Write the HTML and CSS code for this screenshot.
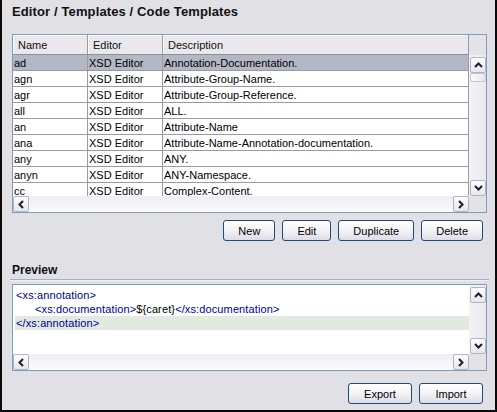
FILE: index.html
```html
<!DOCTYPE html>
<html>
<head>
<meta charset="utf-8">
<title>Code Templates</title>
<link rel="stylesheet" href="styles.css">
</head>
<body>
<div class="panel">
  <div class="title">Editor / Templates / Code Templates</div>

  <div class="table-box">
    <div class="header">
      <div class="hcell">Name</div>
      <div class="hcell">Editor</div>
      <div class="hcell">Description</div>
    </div>
    <div class="corner"></div>
    <div class="rows">
      <div class="row sel"><div class="cell">ad</div><div class="cell">XSD Editor</div><div class="cell">Annotation-Documentation.</div></div>
      <div class="row"><div class="cell">agn</div><div class="cell">XSD Editor</div><div class="cell">Attribute-Group-Name.</div></div>
      <div class="row"><div class="cell">agr</div><div class="cell">XSD Editor</div><div class="cell">Attribute-Group-Reference.</div></div>
      <div class="row"><div class="cell">all</div><div class="cell">XSD Editor</div><div class="cell">ALL.</div></div>
      <div class="row"><div class="cell">an</div><div class="cell">XSD Editor</div><div class="cell">Attribute-Name</div></div>
      <div class="row"><div class="cell">ana</div><div class="cell">XSD Editor</div><div class="cell">Attribute-Name-Annotation-documentation.</div></div>
      <div class="row"><div class="cell">any</div><div class="cell">XSD Editor</div><div class="cell">ANY.</div></div>
      <div class="row"><div class="cell">anyn</div><div class="cell">XSD Editor</div><div class="cell">ANY-Namespace.</div></div>
      <div class="row"><div class="cell">cc</div><div class="cell">XSD Editor</div><div class="cell">Complex-Content.</div></div>
    </div>
    <div class="vscroll">
      <div class="sbtn"><svg width="9" height="6" viewBox="0 0 9 6"><path d="M1 5L4.5 1.5L8 5" fill="none" stroke="#1e1e2a" stroke-width="2"/></svg></div>
      <div class="thumb"></div>
      <div class="vspace"></div>
      <div class="sbtn"><svg width="9" height="6" viewBox="0 0 9 6"><path d="M1 1L4.5 4.5L8 1" fill="none" stroke="#1e1e2a" stroke-width="2"/></svg></div>
    </div>
    <div class="hscroll">
      <div class="sbtn"><svg width="6" height="9" viewBox="0 0 6 9"><path d="M5 1L1.5 4.5L5 8" fill="none" stroke="#1e1e2a" stroke-width="2"/></svg></div>
      <div class="sbtn"><svg width="6" height="9" viewBox="0 0 6 9"><path d="M1 1L4.5 4.5L1 8" fill="none" stroke="#1e1e2a" stroke-width="2"/></svg></div>
    </div>
    <div class="corner"></div>
  </div>

  <div class="btn-row">
    <button class="btn">New</button>
    <button class="btn">Edit</button>
    <button class="btn">Duplicate</button>
    <button class="btn">Delete</button>
  </div>

  <div class="section-label">Preview</div>
  <div class="separator"></div>

  <div class="preview-box">
    <div class="code">
      <div class="line"><span class="tag">&lt;xs:annotation&gt;</span></div>
      <div class="line indent"><span class="tag">&lt;xs:documentation&gt;</span>${caret}<span class="tag">&lt;/xs:documentation&gt;</span></div>
      <div class="line current"><span class="tag">&lt;/xs:annotation&gt;</span></div>
    </div>
    <div class="vscroll pv">
      <div class="sbtn"><svg width="9" height="6" viewBox="0 0 9 6"><path d="M1 5L4.5 1.5L8 5" fill="none" stroke="#1e1e2a" stroke-width="2"/></svg></div>
      <div class="vspace"></div>
      <div class="sbtn"><svg width="9" height="6" viewBox="0 0 9 6"><path d="M1 1L4.5 4.5L8 1" fill="none" stroke="#1e1e2a" stroke-width="2"/></svg></div>
    </div>
    <div class="hscroll">
      <div class="sbtn"><svg width="6" height="9" viewBox="0 0 6 9"><path d="M5 1L1.5 4.5L5 8" fill="none" stroke="#1e1e2a" stroke-width="2"/></svg></div>
      <div class="sbtn"><svg width="6" height="9" viewBox="0 0 6 9"><path d="M1 1L4.5 4.5L1 8" fill="none" stroke="#1e1e2a" stroke-width="2"/></svg></div>
    </div>
    <div class="corner"></div>
  </div>

  <div class="btn-row bottom">
    <button class="btn wide">Export</button>
    <button class="btn wide">Import</button>
  </div>
</div>
</body>
</html>
```

FILE: styles.css
```css
html, body {
  margin: 0;
  padding: 0;
}

body {
  background: #e1e0e4;
  font-family: "Liberation Sans", Arial, sans-serif;
  font-size: 11px;
  color: #000;
}

.panel {
  box-sizing: border-box;
  width: 497px;
  height: 412px;
  border: 2px solid #0a0a0a;
  border-top: 0;
  padding: 4px 8px 0 10px;
  display: flex;
  flex-direction: column;
}

.title {
  font-size: 13px;
  font-weight: bold;
  line-height: 16px;
  height: 16px;
  margin-bottom: 14px;
  letter-spacing: 0.12px;
  color: #111;
}

/* ---------- table ---------- */
.table-box {
  box-sizing: border-box;
  height: 179px;
  border: 1px solid #7f9db9;
  display: grid;
  grid-template-columns: 456px 17px;
  grid-template-rows: 20px 141px 16px;
  background: #e3e2e6;
}

.header {
  display: grid;
  grid-template-columns: 75px 75px 306px;
  background: #e9e8ec;
}

.hcell {
  box-sizing: border-box;
  height: 20px;
  line-height: 19px;
  padding: 1px 0 0 5px;
  border-right: 1px solid #9a9aa2;
  border-bottom: 1px solid #8e8e96;
  box-shadow: inset 1px 1px 0 #fbfbfc;
  color: #111;
}

.corner {
  background: #e3e2e6;
}

.rows {
  overflow: hidden;
  background: #fff;
}

.row {
  display: grid;
  grid-template-columns: 75px 75px 306px;
  box-sizing: border-box;
  height: 16px;
  border-bottom: 1px solid #9b9b9b;
}

.row.sel {
  background: #b4b7c5;
}

.cell {
  box-sizing: border-box;
  padding: 1px 0 0 1px;
  line-height: 14px;
  border-right: 1px solid #9b9b9b;
  white-space: nowrap;
  overflow: hidden;
}

/* ---------- scrollbars ---------- */
.vscroll {
  display: flex;
  flex-direction: column;
  align-items: flex-end;
  padding: 2px 0 0 0;
  background: linear-gradient(to right, #f4f4f7, #e9e9ee);
}

.vspace {
  flex: 1;
}

.hscroll {
  display: flex;
  justify-content: space-between;
  background: linear-gradient(#eeeef3, #fbfbfd);
}

.sbtn {
  box-sizing: border-box;
  width: 16px;
  height: 16px;
  border: 1px solid #b1b3c3;
  border-radius: 2px;
  background: linear-gradient(#fdfdfe, #e6e7ee);
  display: flex;
  align-items: center;
  justify-content: center;
}

.thumb {
  box-sizing: border-box;
  width: 16px;
  height: 9px;
  border: 1px solid #c3c5d2;
  border-radius: 2px;
  background: linear-gradient(to right, #fafafc, #e4e5ec);
}

/* ---------- buttons ---------- */
.btn-row {
  display: flex;
  justify-content: flex-end;
  gap: 7px;
  margin-top: 7px;
  padding-right: 4px;
}

.btn-row.bottom {
  margin-top: 12px;
}

.btn {
  box-sizing: border-box;
  height: 21px;
  padding: 0 14px;
  margin: 0;
  border: 1px solid #1f4b7a;
  border-radius: 3px;
  background: linear-gradient(#ffffff 0%, #f5f5f7 45%, #dcdce5 100%);
  font-family: "Liberation Sans", Arial, sans-serif;
  font-size: 11px;
  color: #000;
}

.btn.wide {
  width: 64px;
  padding: 0;
}

/* ---------- preview ---------- */
.section-label {
  margin-top: 22px;
  font-size: 12px;
  font-weight: bold;
  line-height: 14px;
  height: 14px;
  color: #111;
}

.separator {
  margin: 2px -2px 0 -2px;
  height: 1px;
  background: #9fb2ca;
  border-bottom: 1px solid #f0f0f3;
}

.preview-box {
  box-sizing: border-box;
  margin-top: 3px;
  height: 87px;
  border: 1px solid #7f9db9;
  display: grid;
  grid-template-columns: 456px 17px;
  grid-template-rows: 69px 16px;
  background: #e3e2e6;
}

.code {
  background: #fff;
  padding: 3px 0 0 2px;
  overflow: hidden;
}

.line {
  height: 14px;
  line-height: 14px;
  padding-left: 1px;
  white-space: nowrap;
  letter-spacing: 0.12px;
}

.line.indent {
  padding-left: 20px;
}

.line.current {
  background: #e0eae0;
}

.tag {
  color: #000096;
}
```
